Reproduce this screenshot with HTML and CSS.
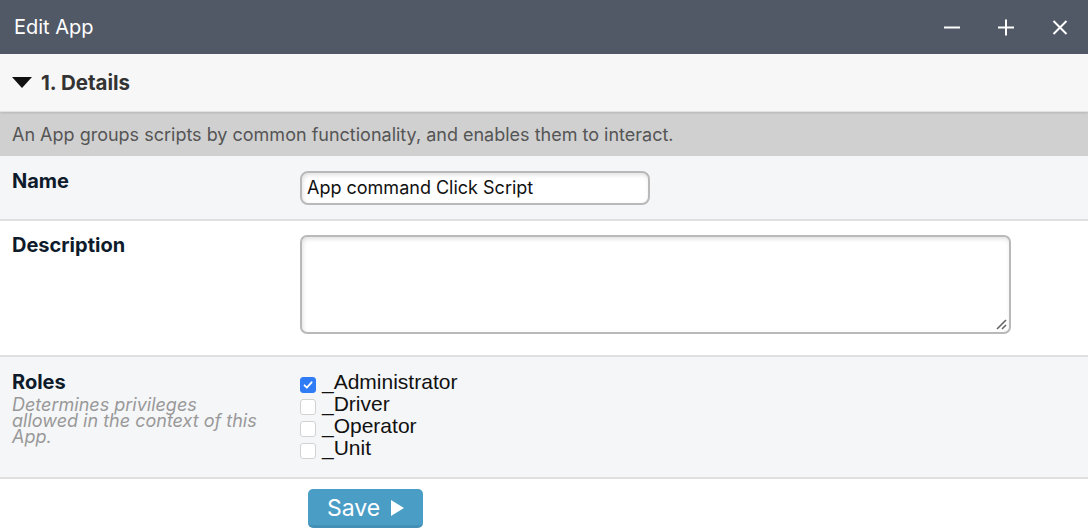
FILE: index.html
```html
<!DOCTYPE html>
<html>
<head>
<meta charset="utf-8">
<link rel="stylesheet" href="styles.css">
</head>
<body>
<div class="window">
  <div class="titlebar">
    <div class="title">Edit App</div>
    <div class="controls">
      <svg class="ctl" width="18" height="18" viewBox="0 0 18 18"><path d="M1 9.5h16" stroke="#fff" stroke-width="2"/></svg>
      <svg class="ctl" width="18" height="18" viewBox="0 0 18 18"><path d="M1 9.5h16M9 1.5v16" stroke="#fff" stroke-width="2"/></svg>
      <svg class="ctl" width="18" height="18" viewBox="0 0 18 18"><path d="M2.5 3l13 13M15.5 3l-13 13" stroke="#fff" stroke-width="2"/></svg>
    </div>
  </div>
  <div class="section-head">
    <svg class="tri" width="20" height="12" viewBox="0 0 20 12"><path d="M0 0h20L10 11z" fill="#111"/></svg>
    <span>1. Details</span>
  </div>
  <div class="info">An App groups scripts by common functionality, and enables them to interact.</div>
  <div class="row row-name alt">
    <div class="label"><div class="lbl">Name</div></div>
    <div class="field"><div class="input">App command Click Script</div></div>
  </div>
  <div class="row row-desc">
    <div class="label"><div class="lbl">Description</div></div>
    <div class="field"><div class="textarea"><svg class="grip" width="14" height="14" viewBox="0 0 14 14"><path d="M3 12L12 3M8 12l4-4" stroke="#666" stroke-width="1.6"/></svg></div></div>
  </div>
  <div class="row row-roles alt">
    <div class="label">
      <div class="lbl">Roles</div>
      <div class="hint">Determines privileges allowed in the context of this App.</div>
    </div>
    <div class="field checks">
      <label class="check"><span class="box on"><svg width="12" height="12" viewBox="0 0 12 12"><path d="M2.5 6.3l2.4 2.4L9.6 3.3" stroke="#fff" stroke-width="1.8" fill="none" stroke-linecap="round" stroke-linejoin="round"/></svg></span>_Administrator</label>
      <label class="check"><span class="box"></span>_Driver</label>
      <label class="check"><span class="box"></span>_Operator</label>
      <label class="check"><span class="box"></span>_Unit</label>
    </div>
  </div>
  <div class="actions">
    <button class="save">Save <svg width="13" height="16" viewBox="0 0 13 16"><path d="M0 0l13 8-13 8z" fill="#fff"/></svg></button>
  </div>
</div>
</body>
</html>
```

FILE: styles.css
```css
* { box-sizing: border-box; }
html, body { margin: 0; padding: 0; }
body {
  font-family: Inter, "Noto Sans", sans-serif;
  background: #fff;
  width: 1088px;
  height: 532px;
  overflow: hidden;
}
.window { width: 1088px; }
.titlebar {
  height: 54px;
  background: #515866;
  display: flex;
  align-items: center;
  justify-content: space-between;
  padding: 0 19px 0 14px;
}
.title {
  color: #fff;
  font-size: 20px;
  padding-bottom: 1px;
}
.controls { display: flex; gap: 36px; align-items: center; }
.ctl { display: block; }
.section-head {
  height: 58px;
  background: #f7f7f7;
  display: flex;
  align-items: center;
  padding-left: 12px;
  gap: 9px;
  font-size: 20.5px;
  font-weight: 700;
  color: #333;
  box-shadow: 0 1px 2px rgba(0,0,0,0.12);
  position: relative;
  z-index: 1;
  border-bottom: 1px solid #e2e2e2;
}
.tri { display: block; margin-top: 1px; }
.info {
  height: 44px;
  background: #d0d0d0;
  color: #555;
  font-size: 18px;
  display: flex;
  align-items: center;
  padding-left: 12px;
  padding-top: 0;
}
.row {
  display: flex;
  border-bottom: 2px solid #e0e0e0;
  background: #fff;
}
.row.alt { background: #f5f6f8; }
.label {
  width: 288px;
  margin-left: 12px;
  flex-shrink: 0;
}
.lbl {
  font-size: 20px;
  font-weight: 700;
  color: #0e1b2b;
  line-height: 24px;
}
.row-name { height: 65px; }
.row-name .label { padding-top: 13px; }
.row-name .field { padding-top: 15px; }
.input {
  width: 350px;
  height: 34px;
  border: 2px solid #b9b9b9;
  border-radius: 8px;
  background: #fff;
  box-shadow: inset 1px 2px 4px rgba(0,0,0,0.12);
  font-size: 18px;
  color: #111;
  padding: 0 0 0 5px;
  line-height: 29px;
}
.row-desc { height: 136px; }
.row-desc .label { padding-top: 12px; }
.row-desc .field { padding-top: 14px; }
.textarea {
  width: 711px;
  height: 99px;
  border: 2px solid #b9b9b9;
  border-radius: 7px;
  background: #fff;
  box-shadow: inset 1px 2px 4px rgba(0,0,0,0.12);
  position: relative;
}
.grip { position: absolute; right: 1px; bottom: 1px; }
.row-roles { height: 122px; }
.row-roles .label { padding-top: 13px; }
.hint {
  font-style: italic;
  color: #999;
  font-size: 18px;
  line-height: 16px;
  margin-top: 3px;
  width: 252px;
}
.checks {
  padding-top: 14px;
  display: flex;
  flex-direction: column;
}
.check {
  display: flex;
  align-items: center;
  height: 22px;
  font-size: 21px;
  color: #111;
  gap: 6px;
  font-family: "Liberation Sans", Arial, sans-serif;
}
.box {
  width: 16px;
  height: 16px;
  border: 1px solid #d2d2d2;
  border-radius: 3px;
  background: #fff;
  margin-top: 5px;
  display: flex;
  align-items: center;
  justify-content: center;
}
.box.on {
  background: #2f7cf6;
  border-color: #2f7cf6;
}
.actions {
  padding: 10px 0 0 308px;
}
.save {
  width: 115px;
  height: 39px;
  background: #4a9dc5;
  border: none;
  border-bottom: 3px solid #4290b6;
  border-radius: 5px;
  color: #fff;
  font-family: Inter, sans-serif;
  font-size: 23px;
  display: flex;
  align-items: center;
  justify-content: center;
  gap: 11px;
  padding: 2px 0 0 0;
}
```
